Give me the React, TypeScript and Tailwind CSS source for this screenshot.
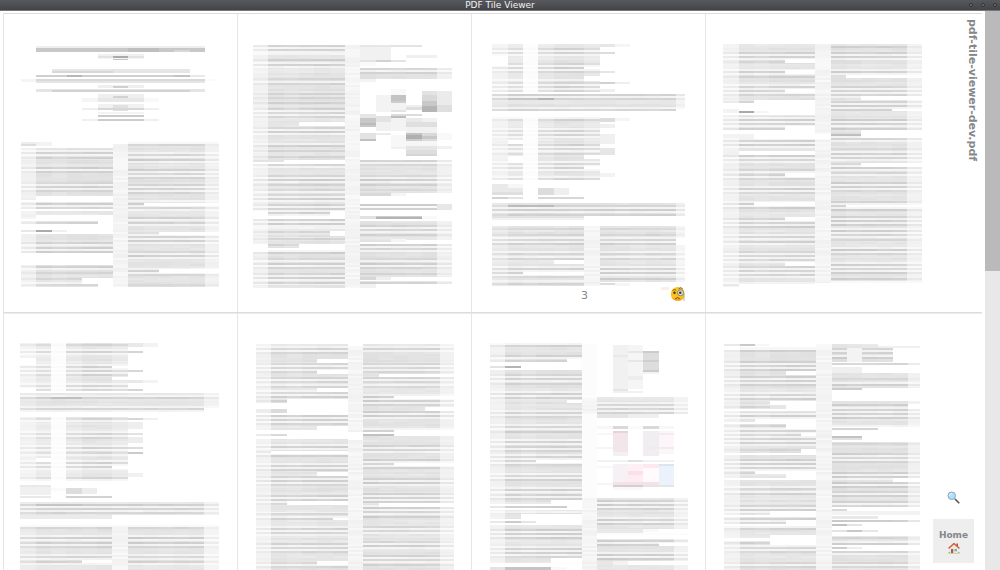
import React from "react";

// Page previews are drawn on a grid of wide, flat cells; three units make one pixel.
type Cell = [from: number, to: number, top: number, bottom: number, tone: number | string];

const PITCH = 46;
const BODY = [0.5, 1, 0.92, 1, 1.03, 1.03, 0.35, 1.05, 1, 1, 1, 1, 0.5];
const WIDE = [0.85, 1.05, 1.05, 1.05, 1, 1, 1, 1, 1, 1, 1, 1, 0.5];
const SPLIT = [0.75, 1, 0.95, 1, 1, 1.05, 0.25, 1.05, 1, 0.95, 1, 1, 0.4];
const TABLE = [0.45, 0.75, 0.1, 0.8, 1, 1, 0.8, 0.3];

const noise = (a: number, b: number) => {
  const n = Math.sin(a * 12.9898 + b * 78.233) * 43758.5453;
  return n - Math.floor(n);
};

// A run of text: mid grey cells with darker and lighter lines through it.
function text(
  from: number,
  to: number,
  top: number,
  bottom: number,
  dark: number[] = [],
  light: number[] = [],
  weights: number[] = BODY,
): Cell[] {
  const cells: Cell[] = [];
  for (let c = from; c < to; c++) {
    for (let y = top; y < bottom; y += 6) {
      const tone = (20 + noise(y, 3) * 8 + noise(y, c) * 5) * weights[c];
      cells.push([c, c + 1, y, Math.min(y + 6, bottom), tone]);
    }
    for (const y of light) cells.push([c, c + 1, y - 3, y + 3, (9 + noise(y, c) * 5) * weights[c]]);
    for (const y of dark) cells.push([c, c + 1, y - 3, y + 3, (36 + noise(y, 7) * 9 + noise(y, c) * 6) * weights[c]]);
  }
  return cells;
}

function blank(from: number, to: number, top: number, bottom: number): Cell {
  return [from, to, top, bottom, 0];
}

function gutter(top: number, bottom: number): Cell[] {
  const cells: Cell[] = [];
  for (let y = top; y < bottom; y += 6) cells.push([6, 7, y, Math.min(y + 6, bottom), 6 + noise(y, 6) * 9]);
  return cells;
}

const down = (dy: number, cells: Cell[]): Cell[] =>
  cells.map(([a, b, y0, y1, tone]) => [a, b, y0 + dy, y1 + dy, tone]);

const page1: Cell[] = [
  [1, 12, 48, 54, 17], [1, 12, 54, 66, 55], [7, 9, 54, 66, 65], [10, 11, 60, 66, 40], [6, 7, 69, 75, 6],
  [5, 8, 72, 78, 14], [5, 8, 78, 84, 28], [6, 7, 78, 84, 85], [6, 7, 84, 90, 60], [5, 8, 84, 87, 10],
  [2, 11, 117, 123, 25], [2, 6, 123, 129, 40], [6, 11, 123, 129, 26],
  [1, 12, 135, 141, 48], [3, 4, 135, 141, 72], [10, 11, 135, 141, 60], [11, 12, 135, 141, 22],
  [0, 1, 147, 156, 10], [1, 12, 147, 153, 38], [1, 12, 153, 159, 26], [12, 13, 147, 153, 4],
  [5, 8, 165, 174, 16], [6, 7, 168, 174, 48], [1, 12, 177, 186, 26], [2, 11, 180, 186, 45],
  [5, 8, 192, 204, 16], [6, 7, 198, 204, 45], [4, 5, 204, 216, 10], [5, 8, 204, 216, 24], [8, 9, 204, 216, 6],
  [5, 8, 222, 234, 14], [6, 7, 225, 243, 30], [4, 9, 234, 240, 16], [5, 8, 234, 240, 40],
  [5, 8, 246, 252, 12], [5, 8, 255, 261, 52], [4, 9, 267, 273, 16], [5, 8, 267, 273, 50],
  ...down(300, [
    [0, 1, 36, 42, 18], [0, 1, 42, 48, 34], [1, 2, 36, 48, 12],
    ...text(0, 6, 54, 210, [70, 83, 114, 127, 159, 171, 183], [64, 76, 120, 165, 177]),
    blank(1, 6, 198, 210),
    ...text(0, 6, 216, 237, [222, 234], [228]),
    ...text(0, 6, 243, 267), blank(1, 6, 255, 267),
    ...text(0, 5, 273, 282, [278]),
    [0, 1, 300, 306, 24], [1, 2, 300, 306, 85], [2, 3, 300, 306, 16],
    ...text(0, 6, 312, 369, [340, 353, 366], [346, 359]),
    ...text(0, 6, 405, 471, [411, 428, 447, 465], [417, 459]),
    blank(4, 6, 444, 462), blank(5, 6, 462, 471),
    ...gutter(42, 471), [7, 13, 36, 42, 7],
    ...text(7, 13, 42, 471,
      [45, 76, 90, 120, 133, 145, 164, 177, 189, 221, 234, 265, 278, 321, 334, 365, 378, 422, 435, 465],
      [70, 82, 96, 126, 139, 170, 183, 214, 227, 240, 271, 284, 315, 327, 340, 371, 384, 416, 428]),
    blank(8, 13, 219, 228), blank(9, 13, 417, 429), blank(9, 13, 306, 315),
  ]),
];

const page2: Cell[] = [
  ...text(0, 6, 45, 390,
    [48, 60, 91, 104, 148, 161, 192, 205, 218, 236, 249, 261, 293, 306, 349, 362, 380],
    [54, 66, 72, 98, 110, 155, 243, 255, 299, 312, 343]),
  blank(3, 6, 276, 288),
  ...gutter(45, 774),
  ...text(7, 11, 45, 51), [7, 9, 51, 90, 14], [10, 12, 75, 84, 15], [7, 10, 90, 96, 28], [8, 9, 90, 96, 45],
  [7, 8, 96, 108, 6],
  ...text(7, 13, 114, 147, [118, 130], [124]), [7, 8, 147, 156, 12],
  [9, 10, 177, 195, 6], [9, 10, 195, 219, 60], [9, 10, 213, 219, 50], [8, 9, 195, 246, 12], [9, 10, 219, 240, 12],
  [10, 11, 225, 231, 16], [10, 11, 231, 240, 32], [11, 12, 183, 195, 28], [11, 12, 195, 219, 38],
  [11, 12, 213, 228, 55], [11, 12, 228, 246, 74], [12, 13, 183, 225, 20], [12, 13, 225, 246, 32],
  [9, 10, 240, 246, 28], [7, 8, 252, 264, 25], [7, 8, 264, 291, 55], [7, 8, 279, 285, 68], [8, 9, 258, 276, 28],
  [8, 9, 276, 303, 14], [9, 10, 252, 258, 35], [9, 10, 258, 264, 66], [9, 10, 264, 303, 12],
  [10, 11, 252, 258, 35], [10, 11, 264, 276, 22], [10, 12, 276, 291, 32], [11, 12, 264, 276, 14],
  [10, 12, 291, 309, 14], [7, 8, 309, 327, 28], [7, 8, 327, 333, 62], [8, 9, 309, 315, 20],
  [9, 10, 315, 357, 8], [10, 11, 309, 315, 60], [10, 11, 315, 327, 80], [10, 11, 327, 333, 50],
  [11, 12, 309, 318, 38], [11, 12, 318, 327, 55], [11, 12, 327, 333, 35], [12, 13, 309, 330, 6],
  [10, 12, 333, 348, 9], [10, 12, 348, 360, 25], [9, 10, 351, 357, 15], [12, 13, 348, 357, 15], [10, 12, 360, 378, 34],
  [10, 12, 372, 378, 42],
  ...down(360, [
    [0, 2, 30, 36, 28],
    ...text(0, 6, 42, 198,
      [46, 78, 90, 104, 121, 134, 147, 165, 178, 190], [52, 84, 96, 127, 140, 153, 171, 184, 195]),
    blank(5, 6, 183, 198), blank(0, 1, 183, 204),
    ...text(0, 6, 207, 294, [210, 222, 247, 267, 286], [216, 228, 234]),
    blank(5, 6, 243, 258), blank(3, 6, 282, 294), blank(0, 1, 282, 294), [1, 6, 300, 306, 10],
    ...text(0, 6, 306, 414, [310, 328, 341, 354, 372, 385, 398], [334, 348, 378, 391, 403]),
    ...text(7, 13, 30, 129, [33, 46, 78, 90, 104, 121], [39, 84, 96]),
    [7, 9, 129, 138, 38], [9, 10, 129, 138, 10],
    [7, 13, 162, 168, 50], [7, 13, 168, 174, 5], [7, 13, 174, 180, 46], [12, 13, 162, 180, 24],
    [7, 8, 198, 207, 30], [8, 11, 198, 204, 50], [8, 11, 201, 207, 75], [11, 12, 198, 207, 6],
    ...text(7, 13, 213, 270, [229, 240, 254], [234, 246]),
    [7, 9, 270, 276, 28], [9, 10, 267, 276, 10],
    ...text(7, 13, 282, 381, [285, 297, 328, 341, 354, 372], [291, 303, 334, 348]),
    [7, 8, 381, 390, 40], [8, 9, 381, 390, 16],
    ...text(7, 13, 393, 402, [398]), [7, 8, 402, 414, 14],
  ]),
];

const page3: Cell[] = [
  ...text(0, 7, 42, 186, [57, 70, 102, 114, 127, 158, 171, 183], [64, 76, 108, 120, 150, 164, 177], TABLE),
  blank(0, 1, 78, 108), blank(6, 7, 111, 117), blank(6, 7, 138, 153),
  [7, 8, 42, 52, 25], [8, 9, 42, 52, 10], [7, 8, 67, 73, 35], [7, 8, 124, 130, 25], [7, 8, 155, 161, 45],
  [8, 9, 155, 161, 16], [7, 8, 177, 186, 16],
  ...text(0, 13, 192, 243, [196, 208, 240], [202, 234], WIDE), [1, 4, 205, 211, 58], [3, 4, 205, 211, 75],
  blank(12, 13, 237, 243),
  ...text(0, 7, 261, 450, [270, 302, 315, 346, 358, 371, 403, 415, 447],
    [264, 296, 308, 321, 352, 364, 396, 409, 421, 441], TABLE),
  [7, 8, 264, 276, 35], [8, 9, 264, 273, 10], [7, 8, 282, 294, 16], [7, 8, 312, 342, 15], [7, 8, 355, 374, 25],
  [7, 8, 430, 442, 12], blank(1, 2, 330, 342), blank(1, 2, 378, 398), blank(6, 7, 375, 387), blank(6, 7, 409, 418),
  [0, 2, 462, 486, 22], [1, 2, 462, 474, 8], [0, 2, 486, 495, 32], [3, 4, 474, 495, 35], [4, 5, 474, 495, 16],
  [0, 1, 501, 507, 45], [1, 2, 501, 507, 28], [3, 6, 501, 507, 40],
  ...text(0, 13, 519, 558, [528, 541, 554], [534, 547], WIDE), [1, 4, 525, 531, 68],
  [0, 6, 558, 564, 28], [0, 6, 564, 570, 14],
  ...text(0, 6, 588, 768, [597, 616, 629, 642, 673, 686, 717, 729, 742, 761],
    [623, 635, 667, 680, 711, 723, 735, 754], SPLIT),
  blank(2, 6, 726, 735), blank(4, 6, 690, 702),
  ...gutter(588, 768),
  ...text(7, 13, 588, 756, [597, 616, 629, 642, 673, 686, 717, 729, 748],
    [623, 635, 667, 680, 711, 723, 735], SPLIT),
  blank(12, 13, 624, 645), [7, 8, 759, 765, 34], [8, 9, 759, 768, 10],
  [11, 11.5, 771, 780, "#fdf0e2"],
];

const page4: Cell[] = [
  ...text(0, 6, 42, 771,
    [70, 82, 95, 126, 140, 170, 183, 195, 215, 270, 283, 296, 333, 346, 378, 390, 421, 434, 447, 478, 490, 521, 534,
      566, 579, 591, 622, 635, 666, 678, 691, 710, 723, 735, 766],
    [76, 88, 120, 132, 164, 177, 189, 264, 277, 289, 327, 339, 352, 384, 396, 427, 440, 472, 484, 516, 528, 572, 585,
      616, 628, 641, 672, 685, 697, 716, 728, 741, 760]),
  blank(4, 6, 87, 99), blank(4, 6, 120, 132), blank(4, 6, 177, 189), blank(2, 6, 210, 255), blank(0, 6, 219, 255),
  [0, 1, 237, 249, 12], [1, 2, 243, 249, 85], [2, 3, 243, 249, 10],
  blank(4, 6, 288, 312), blank(0, 6, 300, 312), blank(2, 6, 312, 327), [0, 2, 312, 324, 12], blank(1, 6, 363, 375),
  blank(4, 6, 429, 441), blank(2, 6, 516, 528), blank(4, 6, 561, 573), blank(4, 6, 696, 708), blank(1, 6, 762, 771),
  ...gutter(42, 759), blank(6, 7, 312, 327),
  ...text(7, 13, 42, 753,
    [51, 70, 82, 126, 170, 183, 195, 215, 227, 239, 270, 283, 296, 327, 358, 371, 384, 403, 415, 428, 459, 471, 484,
      515, 528, 541, 560, 572, 585, 603, 616, 629, 660, 673, 704, 716, 729, 747],
    [76, 88, 120, 132, 177, 189, 202, 221, 234, 277, 289, 320, 333, 365, 377, 390, 409, 421, 434, 465, 477, 521, 534,
      566, 578, 597, 610, 622, 654, 667, 698, 710, 722]),
  blank(8, 13, 135, 144), blank(9, 13, 198, 210), blank(11, 13, 237, 243), blank(9, 13, 300, 324),
  [7, 9, 312, 318, 65], blank(9, 13, 399, 411), blank(8, 13, 525, 531), [7, 13, 753, 759, 6],
];

const page5: Cell[] = [
  ...text(0, 7, 99, 243, [105, 127, 171, 183, 196, 228, 240], [120, 133, 165, 177, 189, 221, 234], TABLE),
  blank(0, 1, 144, 165), blank(0, 1, 234, 243), blank(6, 7, 168, 174), blank(6, 7, 201, 210),
  [7, 8, 99, 111, 22], [8, 9, 99, 111, 12], [7, 8, 124, 130, 42], [7, 8, 180, 186, 40], [7, 8, 210, 219, 22],
  [8, 9, 210, 219, 12], [7, 8, 237, 243, 42],
  ...text(0, 13, 249, 303, [265, 297], [258, 291, 303], WIDE), [2, 4, 262, 268, 64], blank(12, 13, 294, 306),
  ...text(0, 7, 321, 513, [327, 372, 384, 415, 428, 460, 472, 503],
    [333, 366, 378, 408, 421, 434, 453, 466, 478, 510], TABLE),
  [7, 8, 324, 330, 40], [8, 9, 324, 330, 15], [7, 8, 336, 357, 17], [7, 8, 369, 375, 28], [7, 8, 381, 400, 18],
  [7, 8, 412, 418, 35], [7, 8, 425, 431, 52], [7, 8, 489, 500, 14], blank(6, 7, 468, 478), blank(1, 2, 444, 456),
  [0, 2, 525, 531, 22], [0, 2, 531, 555, 15], [2, 3, 533, 543, 5], [3, 4, 533, 552, 34], [4, 5, 533, 552, 18],
  [0, 2, 557, 563, 22], [3, 6, 557, 563, 45],
  ...text(0, 13, 576, 615, [585, 598, 610], [591, 604], WIDE), [1, 4, 582, 588, 58], [0, 6, 615, 627, 20],
  [0, 13, 645, 651, 6],
  ...text(0, 6, 651, 780, [654, 685, 698, 710, 742, 755], [679, 691, 704, 736, 748, 761], SPLIT),
  ...text(7, 13, 651, 780, [654, 685, 698, 710, 742, 755], [679, 691, 704, 736, 748, 761], SPLIT),
  ...gutter(651, 780), blank(4, 6, 750, 759),
];

const page6: Cell[] = [
  ...text(0, 6, 102, 780,
    [117, 130, 162, 174, 186, 205, 217, 231, 249, 262, 274, 318, 330, 343, 375, 411, 426, 438, 468, 481, 501, 513, 525,
      557, 570, 582, 613, 627, 657, 669, 702, 714, 726, 758, 771],
    [111, 123, 168, 180, 211, 224, 243, 256, 312, 324, 336, 405, 417, 432, 462, 475, 507, 519, 564, 576, 608, 620, 650,
      662, 675, 708, 720, 764]),
  blank(4, 6, 147, 159), blank(4, 6, 180, 192), blank(4, 6, 234, 246), blank(2, 6, 267, 315), blank(0, 6, 279, 315),
  [0, 1, 297, 309, 18], [1, 2, 297, 309, 36], blank(4, 6, 348, 360), blank(0, 6, 360, 372), blank(2, 6, 372, 387),
  blank(0, 6, 378, 387), blank(1, 6, 423, 432), blank(4, 6, 486, 498), blank(2, 6, 573, 585), blank(5, 6, 624, 630),
  blank(4, 6, 753, 765),
  ...gutter(108, 780), blank(6, 7, 366, 390),
  ...text(7, 13, 102, 780,
    [117, 162, 174, 186, 205, 217, 231, 262, 274, 286, 306, 318, 362, 375, 407, 420, 450, 462, 475, 507, 519, 551, 563,
      576, 594, 607, 620, 651, 663, 695, 708, 738, 751, 765],
    [111, 123, 168, 180, 211, 224, 256, 268, 280, 312, 324, 356, 413, 426, 456, 468, 513, 525, 557, 569, 588, 601, 613,
      657, 669, 701, 714, 745, 757]),
  blank(8, 13, 192, 201), blank(9, 13, 258, 267), blank(11, 13, 291, 303), blank(9, 13, 360, 378),
  blank(7, 9, 366, 372), [7, 9, 372, 378, 62], blank(9, 13, 459, 468), blank(8, 13, 579, 591),
];

const page7: Cell[] = [
  ...text(0, 6, 102, 780,
    [108, 138, 152, 195, 208, 221, 252, 265, 309, 321, 352, 366, 397, 410, 422, 441, 453, 466, 497, 510, 541, 554, 566,
      591, 635, 659, 672, 685, 717, 729, 742],
    [102, 145, 202, 214, 246, 258, 302, 315, 346, 358, 391, 403, 416, 434, 447, 460, 491, 503, 535, 547, 560, 606, 666,
      679, 711, 723, 735]),
  blank(5, 6, 147, 156), blank(0, 6, 156, 180), [0, 1, 168, 174, 28], [1, 2, 168, 174, 75],
  blank(5, 6, 270, 279), blank(3, 6, 450, 459), blank(4, 6, 570, 588), blank(0, 6, 582, 588), blank(5, 6, 588, 594),
  blank(0, 6, 594, 600), blank(2, 6, 612, 645), blank(0, 6, 627, 645), [0, 1, 632, 638, 22], [1, 2, 632, 638, 52],
  [2, 3, 632, 638, 26], blank(4, 6, 744, 780), blank(0, 6, 759, 771), [0, 1, 771, 780, 28], [1, 4, 771, 780, 58],
  [4, 5, 771, 780, 6],
  [6, 7, 102, 258, 3], ...gutter(261, 312), [6, 7, 312, 564, 3], ...gutter(564, 780),
  [8, 9, 105, 249, 14], [9, 10, 105, 237, 10], [8, 9, 135, 141, 22], [9, 10, 123, 129, 24], [9, 10, 150, 156, 24],
  [10, 11, 123, 129, 52], [10, 11, 129, 180, 34], [10, 11, 150, 156, 48], [10, 11, 180, 186, 52],
  [10, 11, 186, 192, 12], [9, 10, 198, 210, 18], [8, 9, 237, 243, 26], [8, 10, 243, 249, 14],
  ...text(7, 13, 261, 312, [284, 297, 309], [279, 291, 303]), [7, 9, 312, 324, 26], [9, 11, 312, 324, 16],
  [7, 12, 348, 357, 8], [8, 9, 348, 357, 38], [10, 11, 348, 357, 38], [9, 10, 348, 357, 5],
  [8, 9, 362, 370, "#f0d0d8"], [8, 9, 370, 426, "#f3e6eb"], [10, 11, 362, 438, "#f0eef0"],
  [11, 12, 362, 432, "#fdf6f9"], [7, 8, 369, 375, 8], [11, 12, 369, 375, "#f6eaf0"], [7, 8, 412, 418, 10],
  [10, 12, 412, 418, "#f2eaee"], [8, 9, 426, 438, 14],
  [7, 12, 450, 456, 14], [9, 10, 450, 456, 30],
  [8, 9, 462, 525, "#f5f1f4"], [9, 10, 462, 482, "#fff0f5"], [9, 10, 482, 495, "#fddfe9"],
  [9, 10, 495, 525, "#fdedf3"], [10, 11, 462, 474, "#fde8ee"], [10, 11, 474, 525, "#fffafc"],
  [11, 12, 462, 468, "#dce5f2"], [11, 12, 468, 528, "#ebf2fc"], [7, 8, 468, 474, 8], [7, 8, 519, 525, 10],
  [8, 11, 516, 525, "#f8e0e7"], [8, 10, 525, 531, 46], [10, 12, 525, 531, 26], [8, 10, 531, 540, 6],
  ...text(7, 13, 564, 657, [573, 585, 598, 630, 642], [579, 592, 623, 636]), [7, 10, 657, 669, 22],
  [10, 11, 657, 666, 6], [7, 13, 669, 675, 3],
  ...text(7, 13, 687, 753, [692, 705, 736, 748], [698, 730, 742]), blank(11, 13, 700, 708),
  [7, 8, 753, 771, 24], [8, 9, 753, 765, 12], ...text(7, 13, 765, 780),
];

const page8: Cell[] = [
  [0, 1, 102, 108, 22], [1, 2, 102, 108, 54], [2, 3, 102, 108, 8], [1, 6, 112, 120, 8],
  ...text(0, 6, 120, 780,
    [124, 155, 168, 180, 200, 212, 225, 255, 268, 290, 318, 347, 363, 375, 387, 400, 420, 450, 463, 475, 488, 538, 551,
      588, 601, 626, 638, 657, 698, 714, 726, 758, 771],
    [161, 174, 206, 218, 249, 262, 312, 324, 357, 369, 381, 393, 406, 456, 469, 481, 532, 545, 595, 607, 632, 650, 708,
      720, 764]),
  blank(4, 6, 183, 195), blank(3, 6, 273, 303), [3, 4, 284, 296, 25], blank(0, 6, 297, 303), blank(2, 6, 327, 339),
  blank(0, 6, 336, 342), blank(4, 6, 342, 357), blank(5, 6, 369, 378), blank(5, 6, 417, 429), blank(0, 6, 429, 435),
  blank(2, 6, 483, 492), blank(4, 6, 492, 504), blank(0, 6, 504, 510), blank(3, 6, 603, 615), blank(0, 6, 615, 621),
  blank(4, 6, 630, 642), blank(0, 6, 642, 648), blank(3, 6, 675, 705), blank(0, 6, 684, 692),
  ...gutter(102, 780),
  ...text(7, 10, 102, 114), [10, 13, 108, 114, 15],
  ...text(7, 11, 114, 156, [117, 130, 144], [123, 138]), [8, 9, 114, 156, 12],
  ...text(7, 13, 159, 165, [162]), [7, 9, 171, 189, 16],
  ...text(7, 13, 189, 234, [206, 225], [219]), [7, 9, 234, 240, 50],
  ...text(7, 13, 273, 351, [285, 300, 312, 325], [293, 306, 318, 348]), blank(12, 13, 282, 297),
  [7, 10, 353, 359, 42], [7, 9, 378, 384, 60], [7, 9, 384, 390, 30],
  ...text(7, 13, 396, 591, [401, 432, 444, 457, 488, 500, 519, 532, 545, 557, 576, 588],
    [438, 450, 494, 506, 526, 551, 582]),
  blank(11, 13, 504, 516), [7, 8, 597, 603, 38], [7, 13, 603, 615, 12], [7, 10, 617, 628, 22],
  ...text(7, 13, 630, 636, [633]), [7, 8, 642, 648, 62], [8, 9, 642, 648, 28],
  [7, 8, 660, 667, 28], [8, 9, 660, 667, 55], [9, 10, 660, 667, 24],
  ...text(7, 13, 678, 705, [683, 702], [696]), [7, 8, 711, 717, 50], [8, 9, 711, 717, 18],
  ...text(7, 13, 723, 780, [727, 758, 771], [733, 764]),
];

interface PageData {
  number: number;
  left: number;
  end: number;
  cells: Cell[];
}

const rows: { top: number; pages: PageData[] }[] = [
  {
    top: -48,
    pages: [
      { number: 1, left: 54, end: 647, cells: page1 },
      { number: 2, left: 48, end: 645, cells: page2 },
      { number: 3, left: 64, end: 642, cells: page3 },
      { number: 4, left: 55, end: 650, cells: page4 },
    ],
  },
  {
    top: 9,
    pages: [
      { number: 5, left: 52, end: 649, cells: page5 },
      { number: 6, left: 57, end: 651, cells: page6 },
      { number: 7, left: 57, end: 651, cells: page7 },
      { number: 8, left: 58, end: 646, cells: page8 },
    ],
  },
];

function PagePreview({ page, top }: { page: PageData; top: number }) {
  const edge = (column: number) => (column === 13 ? page.end : page.left + column * PITCH);
  return (
    <svg viewBox={`3 ${top} 699 894`} className="block w-full" shapeRendering="crispEdges" role="img" aria-label={`Page ${page.number}`}>
      {page.cells.map(([from, to, y0, y1, tone], i) => {
        const v = typeof tone === "number" ? Math.round(255 - tone) : 0;
        return (
          <rect
            key={i}
            x={edge(from)}
            y={y0}
            width={edge(to) - edge(from)}
            height={y1 - y0}
            fill={typeof tone === "number" ? `rgb(${v},${v},${v})` : tone}
          />
        );
      })}
    </svg>
  );
}

function MonocleFace() {
  return (
    <svg viewBox="0 0 32 32" className="size-4" aria-hidden="true">
      <circle cx="15.5" cy="16" r="14" fill="#fcc21b" />
      <path d="M3 22a14 14 0 0 0 25 0c-5 5-19 6-25 0Z" fill="#f5a51c" />
      <path d="M5.500 8.500q3-3 6-.5" fill="none" stroke="#5d4037" strokeWidth="1.500" strokeLinecap="round" />
      <path d="M18 5q4-4 7 0" fill="none" stroke="#5d4037" strokeWidth="1.500" strokeLinecap="round" />
      <circle cx="9" cy="13.500" r="2.500" fill="#4e342e" />
      <circle cx="21" cy="13.500" r="6" fill="#e3dfc5" stroke="#71808a" strokeWidth="1.800" />
      <circle cx="20.500" cy="13.500" r="2.500" fill="#4e342e" />
      <path d="M11 25q4-4 8 0" fill="none" stroke="#5d4037" strokeWidth="2" strokeLinecap="round" />
      <path d="M27 15q2 8 1 15" fill="none" stroke="#90a4ae" strokeWidth="1.500" />
    </svg>
  );
}

function Magnifier() {
  return (
    <svg viewBox="0 0 26 26" className="size-[13px]" aria-hidden="true">
      <path d="m15 15 3 3" stroke="#78909c" strokeWidth="2.500" />
      <path d="m17.500 17.500 6 6" stroke="#5a5a5a" strokeWidth="3.500" strokeLinecap="round" />
      <circle cx="9.500" cy="9.500" r="7.500" fill="#a9e2fb" stroke="#8fa3ad" strokeWidth="2" />
      <path d="M5 9q1-4 5-4.500" fill="none" stroke="#e6f8ff" strokeWidth="2" strokeLinecap="round" />
    </svg>
  );
}

function House() {
  return (
    <svg viewBox="0 0 24 24" className="size-3" aria-hidden="true">
      <path d="M1 20q11-3 22 0v3H1Z" fill="#a5b96a" />
      <path d="M17 3h3v6h-3Z" fill="#8d5a48" />
      <path d="M4 11 12 4l8 7v11H4Z" fill="#f1e6d8" />
      <path d="M2 12 12 3l10 9" fill="none" stroke="#d9583a" strokeWidth="3" strokeLinejoin="round" strokeLinecap="round" />
      <path d="M6 14h4.500v8H6Z" fill="#a3604a" />
      <path d="M13 14h5v4.500h-5Z" fill="#5fb4dc" />
    </svg>
  );
}

export default function App() {
  return (
    <div className="flex h-screen flex-col bg-white font-['DejaVu_Sans',sans-serif] text-[#85878a]">
      <header className="relative flex h-[11px] shrink-0 items-center justify-center border-b border-[#77757a] bg-linear-to-b from-[#58595d] to-[#434448]">
        <h1 className="text-[9px] leading-[10px] text-[#f2f2f2]">PDF Tile Viewer</h1>
        <div className="absolute inset-y-0 right-[3px] flex items-center gap-2">
          {["Minimize", "Maximize", "Close"].map((label) => (
            <button key={label} type="button" aria-label={label} className="size-1 rounded-full border border-[#2f3033] bg-[#77787c]" />
          ))}
        </div>
      </header>

      <div className="flex min-h-0 flex-1">
        <main className="relative min-w-0 flex-1 overflow-hidden pt-[2px] pr-[3px] pl-[3px]">
          {rows.map((row) => (
            <section key={row.top} className="border-t border-t-[#dcdcdc] pr-[43px] nth-2:shadow-[inset_0_1px_0_#ececec]">
              <div className="grid grid-cols-4">
                {row.pages.map((page) => (
                  <article key={page.number} className="relative border-l border-[#e6e6e6]">
                    <PagePreview page={page} top={row.top} />
                    {page.number === 3 && (
                      <>
                        <span className="absolute bottom-2 left-[109px] text-[11px] leading-4">3</span>
                        <button type="button" aria-label="Inspect page 3" className="absolute right-[19px] bottom-[10px]">
                          <MonocleFace />
                        </button>
                      </>
                    )}
                  </article>
                ))}
              </div>
            </section>
          ))}

          <h2 className="absolute top-2 right-[5px] text-[11px] leading-4 font-bold [writing-mode:vertical-rl]">
            pdf-tile-viewer-dev.pdf
          </h2>
          <nav className="absolute right-[11px] bottom-[7px] flex flex-col items-center gap-[15px]">
            <button type="button" aria-label="Search">
              <Magnifier />
            </button>
            <a href="#home" className="flex h-11 w-[41px] flex-col items-center justify-center bg-[#eeeeee] text-[9px] leading-[14px] font-bold">
              Home
              <House />
            </a>
          </nav>
        </main>

        <div className="w-[15px] shrink-0 bg-[#e8e8e8]" aria-hidden="true">
          <div className="h-[46.5%] bg-[#bababa]" />
        </div>
      </div>
    </div>
  );
}
